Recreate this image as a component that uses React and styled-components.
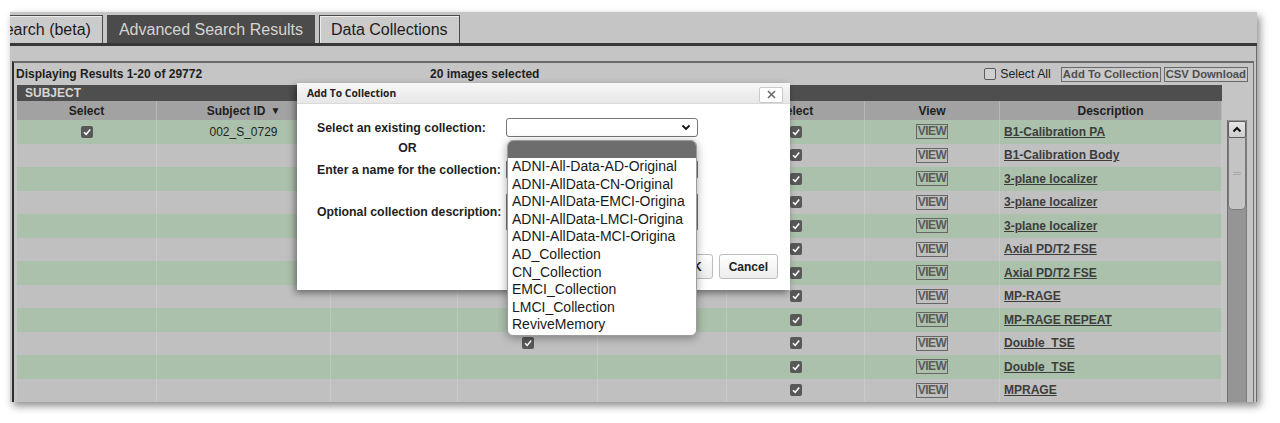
import React from 'react';
import styled, { createGlobalStyle } from 'styled-components';

const Global = createGlobalStyle`
  html, body { margin: 0; padding: 0; background: #ffffff; }
  body { font-family: "Liberation Sans", Arial, sans-serif; }
  * { box-sizing: border-box; }
`;

const Page = styled.div`
  padding: 12px 0 0 10px;
  height: 423px;
`;

const Frame = styled.div`
  position: relative;
  width: 1247px;
  height: 390px;
  background: #c5c5c5;
  box-shadow: 3px 4px 8px rgba(0, 0, 0, 0.45);
  overflow: hidden;
  display: flex;
  flex-direction: column;
`;

const TabBar = styled.div`
  display: flex;
  gap: 4px;
  padding-top: 3px;
  height: 34px;
  border-bottom: 3px solid #383838;
  flex: none;
`;

const Tab = styled.div`
  flex: none;
  padding: 0 11px;
  margin-left: ${p => p.$offset || 0}px;
  font-size: 16px;
  line-height: 27px;
  border: 1px solid #4a4a4a;
  border-bottom: none;
  background: ${p => (p.$active ? '#4b4b4b' : '#cbcbcb')};
  color: ${p => (p.$active ? '#d4d4d4' : '#1c1c1c')};
  box-shadow: ${p => (p.$active ? 'none' : 'inset 1px 1px 0 #ececec')};
  white-space: nowrap;
`;

const Content = styled.div`
  flex: 1;
  display: flex;
  flex-direction: column;
  padding-top: 15px;
  border-right: 1px solid #6c6c6c;
  min-height: 0;
`;

const Panel = styled.div`
  flex: 1;
  margin: 0 2px 0 2px;
  border-top: 2px solid #6a6a6a;
  border-left: 2px solid #2e2e2e;
  border-right: 1px solid #707070;
  display: flex;
  flex-direction: column;
  min-height: 0;
`;

const Toolbar = styled.div`
  height: 22px;
  flex: none;
  display: flex;
  align-items: center;
  padding: 0 5px 0 2px;
  font-size: 12px;
  font-weight: 700;
  color: #1e1e1e;
`;

const ResultsText = styled.div`
  width: 414px;
  flex: none;
`;

const Spacer = styled.div`
  flex: 1;
`;

const SelectAll = styled.label`
  display: flex;
  align-items: center;
  gap: 4px;
  font-weight: 400;
  font-size: 12.3px;
  color: #222;
  margin-right: 10px;
`;

const EmptyBox = styled.span`
  width: 12px;
  height: 12px;
  border: 1px solid #5c5c5c;
  border-radius: 2px;
  background: #d0d0d0;
`;

const ToolButton = styled.span`
  border: 1px solid #6a6a6a;
  padding: 0 1px;
  line-height: 13px;
  font-size: 11.3px;
  font-weight: 700;
  color: #4e4e4e;
  background: #c9c9c9;
  margin-left: ${p => p.$gap || 0}px;
`;

const TableArea = styled.div`
  flex: 1;
  display: flex;
  padding: 0 6px 0 3px;
  min-height: 0;
`;

const Table = styled.div`
  width: 1205px;
  flex: none;
  display: flex;
  flex-direction: column;
`;

const GroupRow = styled.div`
  height: 16px;
  background: #4e4e4e;
  color: #d6d6d6;
  font-size: 12px;
  font-weight: 700;
  line-height: 16px;
  padding-left: 8px;
`;

const COLS = '140px 174px 127px 140px 129px 138px 135px 222px';

const HeadRow = styled.div`
  display: grid;
  grid-template-columns: ${COLS};
  height: 19px;
  background: #a2a2a2;
`;

const HeadCell = styled.div`
  display: flex;
  align-items: center;
  justify-content: center;
  font-size: 12px;
  font-weight: 700;
  color: #1e1e1e;
  border-right: 1px solid #b6b6b6;
  white-space: nowrap;
  overflow: hidden;
`;

const SortArrow = styled.span`
  font-size: 10px;
  margin-left: 5px;
`;

const Row = styled.div`
  display: grid;
  grid-template-columns: ${COLS};
  height: 23.5px;
  flex: none;
  background: ${p => (p.$green ? '#abc1ab' : '#c0c0c0')};
`;

const Cell = styled.div`
  display: flex;
  align-items: center;
  justify-content: ${p => (p.$left ? 'flex-start' : 'center')};
  padding-left: ${p => (p.$left ? '4px' : '0')};
  border-right: 1px solid rgba(255, 255, 255, 0.16);
  font-size: 12px;
  color: #222;
  white-space: nowrap;
`;

const CheckBox = styled.span`
  width: 12px;
  height: 12px;
  border-radius: 2px;
  background: #585858;
  display: inline-flex;
  align-items: center;
  justify-content: center;
`;

const ViewTag = styled.span`
  border: 1px solid #666;
  font-size: 12px;
  font-weight: 700;
  line-height: 13px;
  padding: 0 1px;
  color: #5a5a5a;
  letter-spacing: -0.6px;
`;

const DescLink = styled.span`
  font-weight: 700;
  font-size: 12px;
  color: #3c3c3c;
  text-decoration: underline;
`;

const Scrollbar = styled.div`
  width: 20px;
  flex: none;
  margin: 35px 0 0 5px;
  background: #959595;
  border-left: 1px solid #6e6e6e;
  border-right: 1px solid #7a7a7a;
  display: flex;
  flex-direction: column;
  align-items: center;
  padding-top: 1px;
`;

const ScrollUp = styled.div`
  width: 18px;
  height: 17px;
  border: 1px solid #5e5e5e;
  border-radius: 2px;
  background: linear-gradient(#e6e6e6, #cdcdcd);
  display: flex;
  align-items: center;
  justify-content: center;
`;

const Thumb = styled.div`
  width: 18px;
  height: 72px;
  border: 1px solid #7a7a7a;
  border-top: none;
  border-radius: 0 0 5px 5px;
  background: #c4c4c4;
  display: flex;
  align-items: center;
  justify-content: center;
`;

const Grip = styled.span`
  width: 8px;
  height: 3px;
  border-top: 1px solid #a8a8a8;
  border-bottom: 1px solid #a8a8a8;
`;

/* Modal */
const Modal = styled.div`
  position: absolute;
  left: 287px;
  top: 71px;
  width: 493px;
  height: 207px;
  background: #ffffff;
  box-shadow: -2px 3px 7px rgba(0, 0, 0, 0.45);
  display: flex;
  flex-direction: column;
`;

const TitleBar = styled.div`
  height: 21px;
  flex: none;
  display: flex;
  align-items: center;
  justify-content: space-between;
  padding: 0 7px 0 10px;
  background: linear-gradient(#f7f7f7, #e7e7e7);
  border-bottom: 1px solid #dadada;
  font-family: "Open Sans", "Liberation Sans", sans-serif;
  font-weight: 700;
  font-size: 10.3px;
  color: #222;
`;

const CloseButton = styled.span`
  width: 24px;
  height: 16px;
  margin-top: 3px;
  border: 1px solid #cacaca;
  border-radius: 2px;
  background: #ffffff;
  display: flex;
  align-items: center;
  justify-content: center;
`;

const ModalBody = styled.div`
  flex: 1;
  padding: 14px 12px 0 20px;
  display: flex;
  flex-direction: column;
`;

const FieldRow = styled.div`
  display: flex;
  align-items: center;
  margin-top: ${p => p.$mt || 0}px;
  height: ${p => p.$h}px;
`;

const FieldLabel = styled.div`
  width: 189px;
  flex: none;
  font-size: 12.3px;
  font-weight: 700;
  color: #1e1e1e;
  text-align: ${p => (p.$center ? 'center' : 'left')};
  padding-right: ${p => (p.$center ? '8px' : '0')};
`;

const SelectWrap = styled.div`
  position: relative;
  width: 192px;
  height: 19px;
`;

const SelectBox = styled.div`
  width: 192px;
  height: 19px;
  border: 1px solid #767676;
  border-radius: 3px;
  background: #fff;
  display: flex;
  align-items: center;
  justify-content: flex-end;
  padding-right: 6px;
`;

const TextInput = styled.div`
  width: 192px;
  height: ${p => p.$h}px;
  border: 1px solid #767676;
  border-radius: 2px;
  background: #fff;
`;

const DropList = styled.div`
  position: absolute;
  left: 1px;
  top: 22px;
  width: 190px;
  background: #fff;
  border: 1px solid #9c9c9c;
  border-radius: 6px;
  box-shadow: 0 2px 10px rgba(0, 0, 0, 0.35);
  padding-bottom: 1px;
  z-index: 2;
`;

const DropHeader = styled.div`
  height: 17px;
  background: #6d6d6d;
  border-radius: 5px 5px 0 0;
`;

const DropItem = styled.div`
  height: 17.6px;
  line-height: 17.6px;
  padding-left: 4px;
  font-size: 14px;
  color: #1a1a1a;
  white-space: nowrap;
`;

const ButtonRow = styled.div`
  display: flex;
  justify-content: flex-end;
  gap: 6px;
  margin-top: 23px;
`;

const DlgButton = styled.span`
  height: 25px;
  padding: 0 ${p => p.$pad}px;
  border: 1px solid #bdbdbd;
  border-radius: 3px;
  background: linear-gradient(#ffffff, #ececec);
  font-size: 12px;
  font-weight: 700;
  color: #222;
  display: flex;
  align-items: center;
`;

const Check = () => (
  <CheckBox>
    <svg width="10" height="10" viewBox="0 0 10 10">
      <path d="M2 5.2 L4.2 7.4 L8.2 2.6" fill="none" stroke="#ffffff" strokeWidth="1.6" />
    </svg>
  </CheckBox>
);

const descriptions = [
  'B1-Calibration PA',
  'B1-Calibration Body',
  '3-plane localizer',
  '3-plane localizer',
  '3-plane localizer',
  'Axial PD/T2 FSE',
  'Axial PD/T2 FSE',
  'MP-RAGE',
  'MP-RAGE REPEAT',
  'Double_TSE',
  'Double_TSE',
  'MPRAGE',
];

const collections = [
  'ADNI-All-Data-AD-Original',
  'ADNI-AllData-CN-Original',
  'ADNI-AllData-EMCI-Origina',
  'ADNI-AllData-LMCI-Origina',
  'ADNI-AllData-MCI-Origina',
  'AD_Collection',
  'CN_Collection',
  'EMCI_Collection',
  'LMCI_Collection',
  'ReviveMemory',
];

export default function App() {
  return (
    <Page>
      <Global />
      <Frame>
        <TabBar>
          <Tab $offset={-28}>Search (beta)</Tab>
          <Tab $active>Advanced Search Results</Tab>
          <Tab>Data Collections</Tab>
        </TabBar>
        <Content>
          <Panel>
            <Toolbar>
              <ResultsText>Displaying Results 1-20 of 29772</ResultsText>
              <div>20 images selected</div>
              <Spacer />
              <SelectAll>
                <EmptyBox />
                Select All
              </SelectAll>
              <ToolButton>Add To Collection</ToolButton>
              <ToolButton $gap={3}>CSV Download</ToolButton>
            </Toolbar>
            <TableArea>
              <Table>
                <GroupRow>SUBJECT</GroupRow>
                <HeadRow>
                  <HeadCell>Select</HeadCell>
                  <HeadCell>
                    Subject ID<SortArrow>▼</SortArrow>
                  </HeadCell>
                  <HeadCell>Sex</HeadCell>
                  <HeadCell>Select</HeadCell>
                  <HeadCell>Visit</HeadCell>
                  <HeadCell>Select</HeadCell>
                  <HeadCell>View</HeadCell>
                  <HeadCell>Description</HeadCell>
                </HeadRow>
                {descriptions.map((d, i) => (
                  <Row key={i} $green={i % 2 === 0}>
                    <Cell>{i === 0 && <Check />}</Cell>
                    <Cell>{i === 0 && '002_S_0729'}</Cell>
                    <Cell />
                    <Cell>{(i === 0 || i === 9) && <Check />}</Cell>
                    <Cell />
                    <Cell>
                      <Check />
                    </Cell>
                    <Cell>
                      <ViewTag>VIEW</ViewTag>
                    </Cell>
                    <Cell $left>
                      <DescLink>{d}</DescLink>
                    </Cell>
                  </Row>
                ))}
              </Table>
              <Scrollbar>
                <ScrollUp>
                  <svg width="10" height="7" viewBox="0 0 10 7">
                    <path d="M1.5 5.5 L5 2 L8.5 5.5" fill="none" stroke="#111" strokeWidth="2" />
                  </svg>
                </ScrollUp>
                <Thumb>
                  <Grip />
                </Thumb>
              </Scrollbar>
            </TableArea>
          </Panel>
        </Content>

        <Modal>
          <TitleBar>
            Add To Collection
            <CloseButton>
              <svg width="9" height="9" viewBox="0 0 9 9">
                <path d="M1 1 L8 8 M8 1 L1 8" stroke="#6a6a6a" strokeWidth="1.6" />
              </svg>
            </CloseButton>
          </TitleBar>
          <ModalBody>
            <FieldRow $h={19}>
              <FieldLabel>Select an existing collection:</FieldLabel>
              <SelectWrap>
                <SelectBox>
                  <svg width="10" height="7" viewBox="0 0 10 7">
                    <path d="M1.5 1.5 L5 5 L8.5 1.5" fill="none" stroke="#111" strokeWidth="1.8" />
                  </svg>
                </SelectBox>
                <DropList>
                  <DropHeader />
                  {collections.map(c => (
                    <DropItem key={c}>{c}</DropItem>
                  ))}
                </DropList>
              </SelectWrap>
            </FieldRow>
            <FieldRow $h={16} $mt={3}>
              <FieldLabel $center>OR</FieldLabel>
            </FieldRow>
            <FieldRow $h={19} $mt={4}>
              <FieldLabel>Enter a name for the collection:</FieldLabel>
              <TextInput $h={19} />
            </FieldRow>
            <FieldRow $h={38} $mt={14}>
              <FieldLabel>Optional collection description:</FieldLabel>
              <TextInput $h={38} />
            </FieldRow>
            <ButtonRow>
              <DlgButton $pad={10}>OK</DlgButton>
              <DlgButton $pad={9}>Cancel</DlgButton>
            </ButtonRow>
          </ModalBody>
        </Modal>
      </Frame>
    </Page>
  );
}
